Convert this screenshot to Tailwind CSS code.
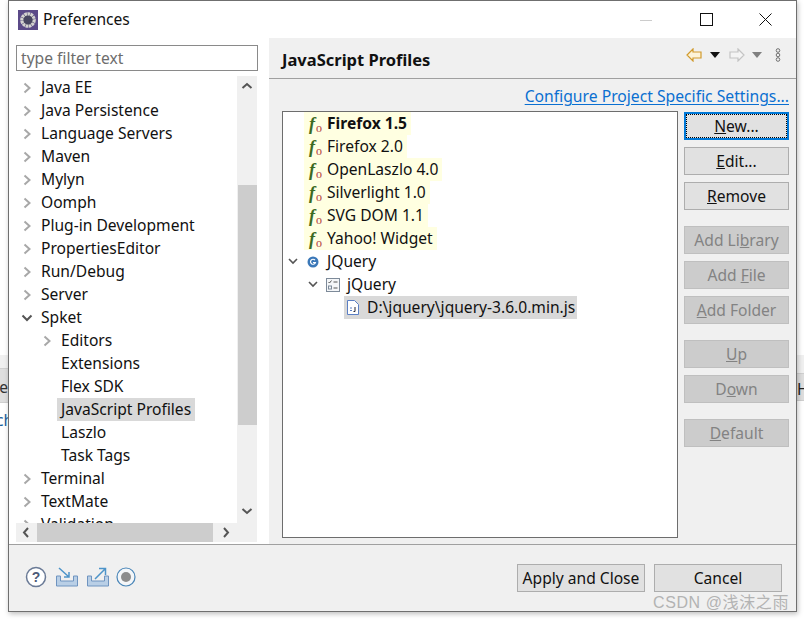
<!DOCTYPE html>
<html lang="en">
<head>
    <meta charset="UTF-8">
    <title>Preferences</title>
    <script src="https://cdn.jsdelivr.net/npm/@tailwindcss/browser@4"></script>
</head>
<body class="relative w-[804px] h-[620px] overflow-hidden bg-white font-['Noto_Sans','Noto_Sans_CJK_SC',sans-serif] text-[15.6px] text-[#111]">
    <!-- what shows of the window behind the dialog -->
    <div class="absolute left-0 top-[355px] w-[8px] h-[100px] overflow-hidden bg-white">
        <div class="h-[14px] bg-[#f0f0f0] border-b border-[#d0d0d0]"></div>
        <div class="h-[34px] bg-[#dedede] border-b border-[#cfcfcf] flex items-center justify-end text-[#333]"><span class="relative top-[2px]">e</span></div>
        <div class="h-[36px] flex items-center text-[#1c5f9c]"><span class="relative left-[-4px]">ch</span></div>
    </div>
    <div class="absolute left-[796px] top-[355px] w-[8px] h-[100px] overflow-hidden bg-white">
        <div class="h-[18px] bg-[#f0f0f0]"></div>
        <div class="h-[28px] bg-[#dedede] border-y border-[#cfcfcf] pl-[1px] flex items-center text-[#222]"><span class="relative top-[3px]">Hi</span></div>
    </div>

    <div class="absolute left-[8px] top-0 w-[789px] h-[612px] flex flex-col border border-[#6f6f6f] bg-white shadow-[1px_2px_5px_rgba(0,0,0,0.25)]">
        <!-- title bar -->
        <div class="h-[37px] shrink-0 flex items-center">
            <svg class="ml-[9px] w-[20px] h-[20px]" viewBox="0 0 20 20">
                <rect width="20" height="20" fill="#5b4a88"/>
                <circle cx="10" cy="10" r="6.2" fill="#474560" stroke="#d4d3d0" stroke-width="3.2" stroke-dasharray="2.6 0.5"/>
            </svg>
            <span class="ml-[5px] leading-none">Preferences</span>
            <div class="ml-auto flex items-center">
                <svg class="w-[14px] h-[14px] mr-[47px]" viewBox="0 0 14 14"><path d="M1 7.5h12" stroke="#ccc"/></svg>
                <svg class="w-[13px] h-[13px] mr-[46px]" viewBox="0 0 13 13"><rect x="0.5" y="0.5" width="12" height="12" fill="none" stroke="#111"/></svg>
                <svg class="w-[13px] h-[13px] mr-[24px]" viewBox="0 0 13 13"><path d="M0.5 0.5l12 12M12.5 0.5l-12 12" stroke="#111"/></svg>
            </div>
        </div>

        <!-- body -->
        <div class="h-[506px] shrink-0 flex">
            <!-- left pane -->
            <div class="w-[260px] shrink-0 pl-[7px] pt-[7px] flex flex-col bg-white">
                <div class="w-[242px] h-[26px] border border-[#8a8a8a] px-[4px] pt-[2px] flex items-center text-[#6d6d6d] leading-none">type filter text</div>
                <div class="mt-[5px] w-[241px] h-[466px] flex flex-wrap content-start relative overflow-hidden bg-[#f0f0f0]">
                    <div class="w-[221px] h-[447px] bg-white overflow-hidden pl-[3px]">
                        <div class="h-[23px] flex items-center"><svg class="w-[8px] h-[12px] ml-[4px]" viewBox="0 0 8 12"><path d="M1.5 1.5l5 4.5-5 4.5" fill="none" stroke="#a8a8a8" stroke-width="2"/></svg><span class="ml-[10px]">Java EE</span></div>
                        <div class="h-[23px] flex items-center"><svg class="w-[8px] h-[12px] ml-[4px]" viewBox="0 0 8 12"><path d="M1.5 1.5l5 4.5-5 4.5" fill="none" stroke="#a8a8a8" stroke-width="2"/></svg><span class="ml-[10px]">Java Persistence</span></div>
                        <div class="h-[23px] flex items-center"><svg class="w-[8px] h-[12px] ml-[4px]" viewBox="0 0 8 12"><path d="M1.5 1.5l5 4.5-5 4.5" fill="none" stroke="#a8a8a8" stroke-width="2"/></svg><span class="ml-[10px]">Language Servers</span></div>
                        <div class="h-[23px] flex items-center"><svg class="w-[8px] h-[12px] ml-[4px]" viewBox="0 0 8 12"><path d="M1.5 1.5l5 4.5-5 4.5" fill="none" stroke="#a8a8a8" stroke-width="2"/></svg><span class="ml-[10px]">Maven</span></div>
                        <div class="h-[23px] flex items-center"><svg class="w-[8px] h-[12px] ml-[4px]" viewBox="0 0 8 12"><path d="M1.5 1.5l5 4.5-5 4.5" fill="none" stroke="#a8a8a8" stroke-width="2"/></svg><span class="ml-[10px]">Mylyn</span></div>
                        <div class="h-[23px] flex items-center"><svg class="w-[8px] h-[12px] ml-[4px]" viewBox="0 0 8 12"><path d="M1.5 1.5l5 4.5-5 4.5" fill="none" stroke="#a8a8a8" stroke-width="2"/></svg><span class="ml-[10px]">Oomph</span></div>
                        <div class="h-[23px] flex items-center"><svg class="w-[8px] h-[12px] ml-[4px]" viewBox="0 0 8 12"><path d="M1.5 1.5l5 4.5-5 4.5" fill="none" stroke="#a8a8a8" stroke-width="2"/></svg><span class="ml-[10px]">Plug-in Development</span></div>
                        <div class="h-[23px] flex items-center"><svg class="w-[8px] h-[12px] ml-[4px]" viewBox="0 0 8 12"><path d="M1.5 1.5l5 4.5-5 4.5" fill="none" stroke="#a8a8a8" stroke-width="2"/></svg><span class="ml-[10px]">PropertiesEditor</span></div>
                        <div class="h-[23px] flex items-center"><svg class="w-[8px] h-[12px] ml-[4px]" viewBox="0 0 8 12"><path d="M1.5 1.5l5 4.5-5 4.5" fill="none" stroke="#a8a8a8" stroke-width="2"/></svg><span class="ml-[10px]">Run/Debug</span></div>
                        <div class="h-[23px] flex items-center"><svg class="w-[8px] h-[12px] ml-[4px]" viewBox="0 0 8 12"><path d="M1.5 1.5l5 4.5-5 4.5" fill="none" stroke="#a8a8a8" stroke-width="2"/></svg><span class="ml-[10px]">Server</span></div>
                        <div class="h-[23px] flex items-center"><svg class="w-[12px] h-[8px] ml-[2px]" viewBox="0 0 12 8"><path d="M1.5 1.5l4.5 4.5 4.5-4.5" fill="none" stroke="#555" stroke-width="2"/></svg><span class="ml-[8px]">Spket</span></div>
                        <div class="h-[23px] flex items-center"><svg class="w-[8px] h-[12px] ml-[24px]" viewBox="0 0 8 12"><path d="M1.5 1.5l5 4.5-5 4.5" fill="none" stroke="#a8a8a8" stroke-width="2"/></svg><span class="ml-[10px]">Editors</span></div>
                        <div class="h-[23px] flex items-center pl-[42px]">Extensions</div>
                        <div class="h-[23px] flex items-center pl-[42px]">Flex SDK</div>
                        <div class="h-[23px] flex items-center pl-[38px]"><span class="h-[23px] flex items-center pl-[4px] pr-[4px] bg-[#d9d9d9]">JavaScript Profiles</span></div>
                        <div class="h-[23px] flex items-center pl-[42px]">Laszlo</div>
                        <div class="h-[23px] flex items-center pl-[42px]">Task Tags</div>
                        <div class="h-[23px] flex items-center"><svg class="w-[8px] h-[12px] ml-[4px]" viewBox="0 0 8 12"><path d="M1.5 1.5l5 4.5-5 4.5" fill="none" stroke="#a8a8a8" stroke-width="2"/></svg><span class="ml-[10px]">Terminal</span></div>
                        <div class="h-[23px] flex items-center"><svg class="w-[8px] h-[12px] ml-[4px]" viewBox="0 0 8 12"><path d="M1.5 1.5l5 4.5-5 4.5" fill="none" stroke="#a8a8a8" stroke-width="2"/></svg><span class="ml-[10px]">TextMate</span></div>
                        <div class="h-[23px] flex items-center"><svg class="w-[8px] h-[12px] ml-[4px]" viewBox="0 0 8 12"><path d="M1.5 1.5l5 4.5-5 4.5" fill="none" stroke="#a8a8a8" stroke-width="2"/></svg><span class="ml-[10px]">Validation</span></div>
                    </div>
                    <!-- vertical scrollbar -->
                    <div class="w-[20px] h-[447px] flex flex-col items-center">
                        <svg class="w-[20px] h-[20px]" viewBox="0 0 20 20"><path d="M5.5 12l4.5-4 4.5 4" fill="none" stroke="#555" stroke-width="2"/></svg>
                        <div class="mt-[89px] w-[19px] h-[240px] bg-[#cdcdcd]"></div>
                        <svg class="mt-auto mb-[2px] w-[20px] h-[20px]" viewBox="0 0 20 20"><path d="M5.5 8l4.5 4 4.5-4" fill="none" stroke="#555" stroke-width="2"/></svg>
                    </div>
                    <!-- horizontal scrollbar -->
                    <div class="w-[241px] h-[19px] flex items-center">
                        <svg class="w-[21px] h-[19px]" viewBox="0 0 21 19"><path d="M12 5l-4 4.5 4 4.5" fill="none" stroke="#555" stroke-width="2"/></svg>
                        <div class="w-[176px] h-[19px] bg-[#cdcdcd]"></div>
                        <svg class="w-[21px] h-[19px] ml-[2px]" viewBox="0 0 21 19"><path d="M9 5l4 4.5-4 4.5" fill="none" stroke="#555" stroke-width="2"/></svg>
                    </div>
                </div>
            </div>

            <!-- right pane -->
            <div class="flex-1 min-w-0 flex flex-col bg-[#f0f0f0]">
                <div class="h-[41px] shrink-0 flex border-b border-[#a0a0a0]">
                    <span class="ml-[13px] mt-[10px] font-bold text-[16.5px]">JavaScript Profiles</span>
                    <div class="ml-auto flex items-center mr-[15px] pb-[6px]">
                        <svg class="w-[16px] h-[14px]" viewBox="0 0 16 14"><path d="M7 1L1 7l6 6V10h8V4H7z" fill="#fdf3d8" stroke="#d19a2c" stroke-width="1.2"/></svg>
                        <svg class="ml-[8px] w-[10px] h-[6px]" viewBox="0 0 10 6"><path d="M0 0h10L5 6z" fill="#111"/></svg>
                        <svg class="ml-[9px] w-[16px] h-[14px]" viewBox="0 0 16 14"><path d="M9 1l6 6-6 6V10H1V4h8z" fill="#f4f4f4" stroke="#c4c4c4" stroke-width="1.2"/></svg>
                        <svg class="ml-[7px] w-[10px] h-[6px]" viewBox="0 0 10 6"><path d="M0 0h10L5 6z" fill="#808080"/></svg>
                        <svg class="ml-[13px] w-[6px] h-[14px]" viewBox="0 0 6 14"><g fill="none" stroke="#707070"><circle cx="3" cy="2.5" r="1.8"/><circle cx="3" cy="7" r="1.8"/><circle cx="3" cy="11.5" r="1.8"/></g></svg>
                    </div>
                </div>
                <div class="flex-1 min-h-0 flex flex-col pt-[6px] pl-[13px]">
                    <div class="h-[24px] shrink-0 flex justify-end pr-[7px]"><span class="text-[#0a6fd1] text-[15.7px] underline underline-offset-2">Configure Project Specific Settings...</span></div>
                    <div class="mt-[2px] flex gap-[6px]">
                        <!-- profile tree -->
                        <div class="w-[396px] h-[427px] shrink-0 border border-[#6d6d6d] bg-white pl-[21px]">
                            <div class="h-[23px] flex"><div class="h-[23px] flex items-center pl-[5px] pr-[4px] bg-[#ffffe1]"><span class="font-['Liberation_Serif'] italic font-bold text-[#3d6b1f] text-[18px] w-[18px] leading-none">f<span class="relative top-[2px] left-[1px] text-[#b03a3a] text-[12px] not-italic font-normal">o</span></span><span class="font-bold">Firefox 1.5</span></div></div>
                            <div class="h-[23px] flex"><div class="h-[23px] flex items-center pl-[5px] pr-[4px] bg-[#ffffe1]"><span class="font-['Liberation_Serif'] italic font-bold text-[#3d6b1f] text-[18px] w-[18px] leading-none">f<span class="relative top-[2px] left-[1px] text-[#b03a3a] text-[12px] not-italic font-normal">o</span></span><span>Firefox 2.0</span></div></div>
                            <div class="h-[23px] flex"><div class="h-[23px] flex items-center pl-[5px] pr-[4px] bg-[#ffffe1]"><span class="font-['Liberation_Serif'] italic font-bold text-[#3d6b1f] text-[18px] w-[18px] leading-none">f<span class="relative top-[2px] left-[1px] text-[#b03a3a] text-[12px] not-italic font-normal">o</span></span><span>OpenLaszlo 4.0</span></div></div>
                            <div class="h-[23px] flex"><div class="h-[23px] flex items-center pl-[5px] pr-[4px] bg-[#ffffe1]"><span class="font-['Liberation_Serif'] italic font-bold text-[#3d6b1f] text-[18px] w-[18px] leading-none">f<span class="relative top-[2px] left-[1px] text-[#b03a3a] text-[12px] not-italic font-normal">o</span></span><span>Silverlight 1.0</span></div></div>
                            <div class="h-[23px] flex"><div class="h-[23px] flex items-center pl-[5px] pr-[4px] bg-[#ffffe1]"><span class="font-['Liberation_Serif'] italic font-bold text-[#3d6b1f] text-[18px] w-[18px] leading-none">f<span class="relative top-[2px] left-[1px] text-[#b03a3a] text-[12px] not-italic font-normal">o</span></span><span>SVG DOM 1.1</span></div></div>
                            <div class="h-[23px] flex"><div class="h-[23px] flex items-center pl-[5px] pr-[4px] bg-[#ffffe1]"><span class="font-['Liberation_Serif'] italic font-bold text-[#3d6b1f] text-[18px] w-[18px] leading-none">f<span class="relative top-[2px] left-[1px] text-[#b03a3a] text-[12px] not-italic font-normal">o</span></span><span>Yahoo! Widget</span></div></div>
                            <div class="h-[23px] flex items-center -ml-[16px]"><svg class="w-[10px] h-[7px]" viewBox="0 0 10 7"><path d="M1 1l4 4 4-4" fill="none" stroke="#555" stroke-width="1.6"/></svg><svg class="ml-[9px] w-[12px] h-[12px]" viewBox="0 0 12 12"><circle cx="6" cy="6" r="5.5" fill="#3b78b8"/><path d="M8 4.2A2.5 2.5 0 1 0 8.4 6.5H6" fill="none" stroke="#fff" stroke-width="1.2"/></svg><span class="ml-[8px]">JQuery</span></div>
                            <div class="h-[23px] flex items-center ml-[4px]"><svg class="w-[10px] h-[7px]" viewBox="0 0 10 7"><path d="M1 1l4 4 4-4" fill="none" stroke="#555" stroke-width="1.6"/></svg><svg class="ml-[8px] w-[14px] h-[14px]" viewBox="0 0 14 14"><rect x="0.5" y="0.5" width="13" height="13" fill="#f4f6f8" stroke="#7d8a99"/><path d="M2.5 4l1 1 2-2.5" fill="none" stroke="#555"/><path d="M7.5 4h4M7.5 10h4" stroke="#555"/><rect x="2.5" y="8" width="3" height="3" fill="none" stroke="#7d8a99"/></svg><span class="ml-[7px]">jQuery</span></div>
                            <div class="h-[23px] flex ml-[40px]"><div class="h-[23px] flex items-center pl-[3px] pr-[2px] bg-[#d9d9d9]"><svg class="w-[12px] h-[15px]" viewBox="0 0 12 15"><path d="M0.5 0.5h7l4 4v10h-11z" fill="#fff" stroke="#5b7fc4"/><path d="M3 8h2M3 10.5h2" stroke="#5b7fc4"/><path d="M8 7v4.5H6.5" fill="none" stroke="#223"/></svg><span class="ml-[8px]">D:\jquery\jquery-3.6.0.min.js</span></div></div>
                        </div>
                        <!-- side buttons -->
                        <div class="w-[105px] mt-[1px] shrink-0 flex flex-col">
                            <div class="h-[28px] pt-[2px] flex items-center justify-center border-2 border-[#0078d7] bg-[#e1e1e1] outline-1 -outline-offset-3 outline-dotted outline-black"><span><u>N</u>ew...</span></div>
                            <div class="mt-[7px] h-[28px] pt-[2px] flex items-center justify-center border border-[#adadad] bg-[#e1e1e1]"><span><u>E</u>dit...</span></div>
                            <div class="mt-[7px] h-[28px] pt-[2px] flex items-center justify-center border border-[#adadad] bg-[#e1e1e1]"><span><u>R</u>emove</span></div>
                            <div class="mt-[16px] h-[28px] pt-[2px] flex items-center justify-center border border-[#bfbfbf] bg-[#cccccc] text-[#838383]"><span>Add Li<u>b</u>rary</span></div>
                            <div class="mt-[7px] h-[28px] pt-[2px] flex items-center justify-center border border-[#bfbfbf] bg-[#cccccc] text-[#838383]"><span>Add <u>F</u>ile</span></div>
                            <div class="mt-[7px] h-[28px] pt-[2px] flex items-center justify-center border border-[#bfbfbf] bg-[#cccccc] text-[#838383]"><span><u>A</u>dd Folder</span></div>
                            <div class="mt-[16px] h-[28px] pt-[2px] flex items-center justify-center border border-[#bfbfbf] bg-[#cccccc] text-[#838383]"><span><u>U</u>p</span></div>
                            <div class="mt-[7px] h-[28px] pt-[2px] flex items-center justify-center border border-[#bfbfbf] bg-[#cccccc] text-[#838383]"><span>D<u>o</u>wn</span></div>
                            <div class="mt-[16px] h-[28px] pt-[2px] flex items-center justify-center border border-[#bfbfbf] bg-[#cccccc] text-[#838383]"><span><u>D</u>efault</span></div>
                        </div>
                    </div>
                </div>
            </div>
        </div>

        <!-- footer -->
        <div class="flex-1 min-h-0 flex items-center border-t border-[#a0a0a0] bg-[#f0f0f0] relative">
            <div class="ml-[16px] mb-[3px] flex items-center">
                <svg class="w-[22px] h-[22px]" viewBox="0 0 22 22"><circle cx="11" cy="11" r="9.5" fill="#fff" stroke="#6a7a96" stroke-width="1.5"/><text x="11" y="16" text-anchor="middle" font-family="Liberation Sans" font-weight="bold" font-size="14" fill="#4d5a78">?</text></svg>
                <svg class="ml-[8px] w-[24px] h-[22px]" viewBox="0 0 24 22"><path d="M1.5 10h4v5h13v-5h4v10h-21z" fill="#b9cfe6" stroke="#6f94c0"/><path d="M4 2l10 9M14 6v5H9" fill="none" stroke="#4d94c9" stroke-width="1.5"/></svg>
                <svg class="ml-[7px] w-[24px] h-[22px]" viewBox="0 0 24 22"><path d="M1.5 10h4v5h13v-5h4v10h-21z" fill="#b9cfe6" stroke="#6f94c0"/><path d="M9 13l10-10M13 2.5h6.5V9" fill="none" stroke="#4d94c9" stroke-width="1.5"/></svg>
                <svg class="ml-[6px] w-[20px] h-[20px]" viewBox="0 0 20 20"><circle cx="10" cy="10" r="9" fill="#f4f6f8" stroke="#4a86b8" stroke-width="1.2"/><circle cx="10" cy="10" r="5" fill="#8c8c8c"/></svg>
            </div>
            <div class="ml-auto mr-[14px] flex gap-[9px]">
                <div class="w-[128px] h-[28px] pt-[2px] flex items-center justify-center border border-[#adadad] bg-[#e1e1e1]">Apply and Close</div>
                <div class="w-[128px] h-[28px] pt-[2px] flex items-center justify-center border border-[#adadad] bg-[#e1e1e1]">Cancel</div>
            </div>
            <span class="absolute left-[644px] bottom-[-4px] text-[16px] text-[#b3b3b3] tracking-[0.6px] font-['Liberation_Sans','Noto_Sans_CJK_SC',sans-serif]">CSDN @浅沫之雨</span>
        </div>
    </div>
</body>
</html>
